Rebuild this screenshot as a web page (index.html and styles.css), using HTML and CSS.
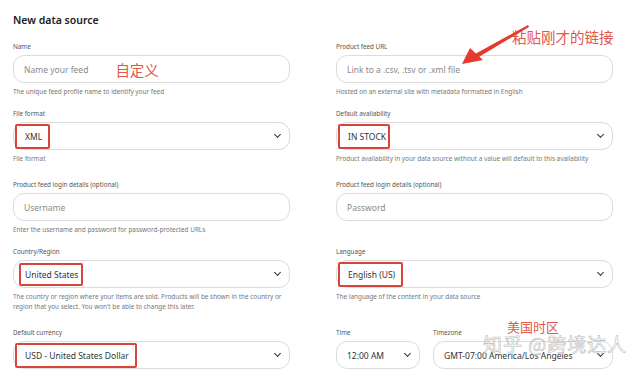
FILE: index.html
```html
<!DOCTYPE html>
<html lang="en">
<head>
  <meta charset="UTF-8">
  <title>New data source</title>
  <link rel="stylesheet" href="styles.css">
</head>
<body>
  <div class="page">
    <h1>New data source</h1>

    <!-- Row 1 -->
    <div class="row">
      <div class="field">
        <div class="label">Name</div>
        <div class="control">
          <span class="placeholder">Name your feed</span>
          <span class="note note-inline">自定义</span>
        </div>
        <div class="help">The unique feed profile name to identify your feed</div>
      </div>
      <div class="field">
        <div class="label">Product feed URL</div>
        <div class="control">
          <span class="placeholder">Link to a .csv, .tsv or .xml file</span>
        </div>
        <div class="help">Hosted on an external site with metadata formatted in English</div>
      </div>
    </div>

    <!-- Row 2 -->
    <div class="row row-wide">
      <div class="field">
        <div class="label">File format</div>
        <div class="control select">
          <span class="mark">XML</span>
          <span class="chevron"></span>
        </div>
        <div class="help">File format</div>
      </div>
      <div class="field">
        <div class="label">Default availability</div>
        <div class="control select">
          <span class="mark mark-tight">IN STOCK</span>
          <span class="chevron"></span>
        </div>
        <div class="help">Product availability in your data source without a value will default to this availability</div>
      </div>
    </div>

    <!-- Row 3 -->
    <div class="row">
      <div class="field">
        <div class="label">Product feed login details (optional)</div>
        <div class="control">
          <span class="placeholder">Username</span>
        </div>
        <div class="help">Enter the username and password for password-protected URLs</div>
      </div>
      <div class="field">
        <div class="label">Product feed login details (optional)</div>
        <div class="control">
          <span class="placeholder">Password</span>
        </div>
      </div>
    </div>

    <!-- Row 4 -->
    <div class="row row-wide">
      <div class="field">
        <div class="label">Country/Region</div>
        <div class="control select">
          <span class="mark mark-short">United States</span>
          <span class="chevron"></span>
        </div>
        <div class="help help-narrow">The country or region where your items are sold. Products will be shown in the country or region that you select. You won't be able to change this later.</div>
      </div>
      <div class="field">
        <div class="label">Language</div>
        <div class="control select">
          <span class="mark">English (US)</span>
          <span class="chevron"></span>
        </div>
        <div class="help">The language of the content in your data source</div>
      </div>
    </div>

    <!-- Row 5 -->
    <div class="row">
      <div class="field">
        <div class="label">Default currency</div>
        <div class="control select">
          <span class="mark">USD - United States Dollar</span>
          <span class="chevron"></span>
        </div>
      </div>
      <div class="field time-row">
        <div class="time">
          <div class="label">Time</div>
          <div class="control select">
            <span class="value">12:00 AM</span>
            <span class="chevron"></span>
          </div>
        </div>
        <div class="zone">
          <div class="label">Timezone</div>
          <div class="control select">
            <span class="value">GMT-07:00 America/Los Angeles</span>
            <span class="chevron"></span>
          </div>
        </div>
      </div>
    </div>

    <!-- Annotations -->
    <span class="note note-url">粘贴刚才的链接</span>
    <svg class="arrow" width="80" height="44" viewBox="0 0 80 44">
      <path d="M72 3 L19 32 L22 35.5 L73 5 Z" fill="#e53a2f"/>
      <path d="M6 42 L14 26 L27 38 Z" fill="#e53a2f"/>
    </svg>
    <span class="note note-zone">美国时区</span>
    <span class="watermark">知乎 @跨境达人</span>
  </div>
</body>
</html>
```

FILE: styles.css
```css
body {
  margin: 0;
  background: #fff;
  font-family: "Noto Sans", "Noto Sans CJK SC", sans-serif;
  color: #2b2b2b;
}
.page {
  position: relative;
  width: 641px;
  height: 372px;
  overflow: hidden;
  padding: 0 0 0 13px;
  box-sizing: border-box;
}
h1 {
  margin: 0;
  padding-top: 12px;
  height: 30px;
  font-size: 10.5px;
  font-weight: 600;
  line-height: 16px;
  color: #202124;
}
.row {
  display: grid;
  grid-template-columns: 277px 277px;
  column-gap: 46px;
  margin-bottom: 12px;
}
.row-wide {
  margin-bottom: 16px;
}
.label {
  font-size: 6.3px;
  line-height: 10px;
  height: 10px;
  margin-bottom: 3px;
  color: #555;
}
.control {
  display: flex;
  align-items: center;
  height: 28px;
  box-sizing: border-box;
  border: 1px solid #dcdcdc;
  border-radius: 11px;
  padding: 0 9px 0 10px;
  font-size: 8.5px;
  background: #fff;
}
.placeholder {
  color: #8a8a8a;
}
.value {
  color: #333;
}
.select .value {
  flex: 1;
}
.mark {
  height: 25px;
  line-height: 22px;
  box-sizing: border-box;
  margin-left: -9px;
  padding: 0 6px 0 8px;
  border: 2px solid #d9453b;
  border-radius: 2px;
  color: #333;
}
.mark-tight {
  padding-right: 2px;
}
.mark-short {
  height: 23px;
  line-height: 20px;
  margin-left: -5px;
  padding: 0 3px 0 4px;
}
.chevron {
  margin-left: auto;
  width: 4px;
  height: 4px;
  border-right: 1.6px solid #333;
  border-bottom: 1.6px solid #333;
  transform: translateY(-2px) rotate(45deg);
}
.help {
  margin-top: 4px;
  font-size: 6.4px;
  line-height: 10px;
  color: #777;
}
.help-narrow {
  max-width: 272px;
}
.time-row {
  display: flex;
  gap: 13px;
}
.time {
  width: 84px;
}
.zone {
  flex: 1;
}
.note {
  position: absolute;
  color: #e2584b;
  font-family: "Noto Sans CJK SC", sans-serif;
  white-space: nowrap;
}
.note-inline {
  position: static;
  margin-left: 27px;
  font-size: 14.5px;
  line-height: 16px;
  transform: translateY(1px);
}
.note-url {
  left: 512px;
  top: 28px;
  font-size: 14.5px;
  line-height: 18px;
}
.note-zone {
  left: 507px;
  top: 321px;
  font-size: 13px;
  line-height: 12px;
}
.arrow {
  position: absolute;
  left: 456px;
  top: 22px;
}
.watermark {
  position: absolute;
  left: 483px;
  top: 336px;
  font-family: "Noto Sans CJK SC", sans-serif;
  font-size: 19px;
  line-height: 16px;
  letter-spacing: 1px;
  color: rgba(255, 255, 255, 0.6);
  -webkit-text-stroke: 0.6px #bdbdbd;
  white-space: nowrap;
}
```
